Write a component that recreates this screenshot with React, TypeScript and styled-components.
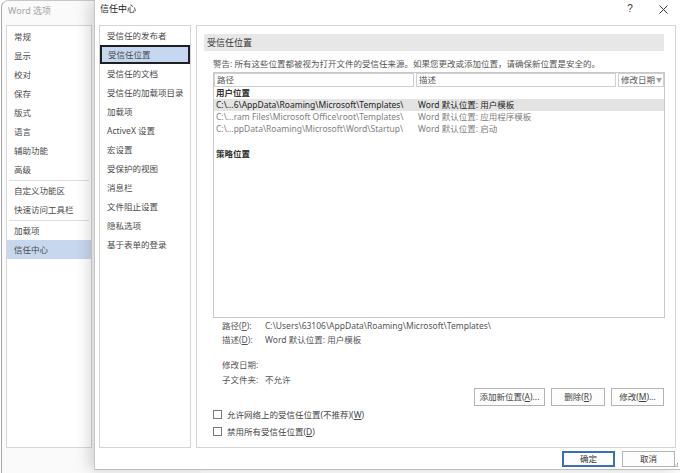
import React from "react";
import styled, { createGlobalStyle } from "styled-components";

const GlobalStyle = createGlobalStyle`
  html, body {
    margin: 0;
    padding: 0;
    background: #fff;
  }
  * {
    box-sizing: border-box;
  }
`;

const font = `"Noto Sans", "Noto Sans CJK SC", sans-serif`;

const Screen = styled.div`
  position: relative;
  width: 680px;
  height: 473px;
  overflow: hidden;
  background: #fff;
  font-family: ${font};
  font-size: 8.5px;
  color: #444;
`;

/* Word 选项 window, sitting behind the dialog */
const BackWindow = styled.div`
  position: absolute;
  left: 1px;
  top: 0;
  width: 200px;
  height: 490px;
  background: #fafafa;
  border-left: 1px solid #a6a6a6;
  border-top: 1px solid #c8c8c8;
  border-top-left-radius: 7px;
  padding-left: 4px;
`;

const BackTitle = styled.div`
  height: 24px;
  line-height: 20px;
  padding-left: 2px;
  color: #a3a3a3;
  font-size: 9px;
`;

const BackList = styled.div`
  width: 86px;
  height: 423px;
  background: #fff;
  border: 1px solid #d6d6d6;
  padding-top: 1px;
`;

const BackItem = styled.div<{ $active?: boolean }>`
  height: 19px;
  line-height: 19px;
  padding-left: 7px;
  color: #4a4a4a;
  background: ${({ $active }) => ($active ? "#c7d7ee" : "transparent")};
`;

const Separator = styled.div`
  height: 1px;
  margin: 1px 2px 0;
  background: #dedede;
`;

/* 信任中心 dialog */
const Dialog = styled.div`
  position: absolute;
  left: 94px;
  top: 0;
  width: 586px;
  height: 470px;
  background: #fff;
  border-left: 1px solid #c6c6c6;
  border-bottom: 1px solid #bdbdbd;
  box-shadow: -5px 0 14px rgba(0, 0, 0, 0.16);
  display: flex;
  flex-direction: column;
`;

const TitleBar = styled.div`
  height: 25px;
  display: flex;
  align-items: flex-start;
  padding: 0 0 0 5px;
`;

const TitleText = styled.div`
  flex: 1;
  line-height: 18px;
  font-size: 9px;
  color: #222;
`;

const TitleIcon = styled.div<{ $w: number }>`
  width: ${({ $w }) => $w}px;
  line-height: 18px;
  text-align: center;
  color: #333;
  font-family: "Liberation Sans", sans-serif;
  font-size: 10px;
`;

const Body = styled.div`
  display: flex;
  gap: 5px;
  height: 423px;
  padding: 0 4px 0 4px;
`;

const Nav = styled.div`
  width: 92px;
  flex-shrink: 0;
  border: 1px solid #d4d4d4;
`;

const NavItem = styled.div<{ $active?: boolean }>`
  height: 19px;
  line-height: ${({ $active }) => ($active ? "15px" : "19px")};
  padding-left: ${({ $active }) => ($active ? "6px" : "7px")};
  color: #4a4a4a;
  background: ${({ $active }) => ($active ? "#c6d8f1" : "transparent")};
  border: ${({ $active }) => ($active ? "2px solid #1f1f1f" : "none")};
`;

const Panel = styled.div`
  flex: 1;
  border: 1px solid #d4d4d4;
  padding: 8px 11px 0 7px;
  display: flex;
  flex-direction: column;
`;

const SectionHeader = styled.div`
  height: 17px;
  line-height: 17px;
  background: #e7e7e7;
  padding-left: 3px;
  color: #333;
  font-size: 9px;
`;

const Content = styled.div`
  padding-left: 9px;
  margin-right: -1px;
  display: flex;
  flex-direction: column;
`;

const Warning = styled.div`
  margin-top: 7px;
  height: 14px;
  line-height: 12px;
  color: #555;
  white-space: nowrap;
`;

const ListBox = styled.div`
  height: 246px;
  border: 1px solid #c9c9c9;
  background: #fff;
`;

const Columns = styled.div`
  display: grid;
  grid-template-columns: 200px 200px 1fr;
  column-gap: 2px;
`;

const HeaderCell = styled.div`
  height: 14px;
  line-height: 12px;
  border: 1px solid #cfcfcf;
  padding-left: 2px;
  color: #555;
  display: flex;
  justify-content: space-between;
  align-items: center;
  white-space: nowrap;
  overflow: hidden;
`;

const SortArrow = styled.span`
  font-size: 6px;
  color: #a0a0a0;
  padding-right: 1px;
`;

const GroupLabel = styled.div<{ $gap?: number }>`
  height: 12px;
  line-height: 12px;
  margin-top: ${({ $gap }) => $gap ?? 0}px;
  padding-left: 2px;
  font-weight: 700;
  color: #333;
`;

const Row = styled(Columns)<{ $selected?: boolean; $muted?: boolean }>`
  height: 12px;
  line-height: 12px;
  background: ${({ $selected }) => ($selected ? "#e3e3e3" : "transparent")};
  color: ${({ $muted }) => ($muted ? "#808080" : "#222")};
  white-space: nowrap;

  & > span {
    padding-left: 2px;
    overflow: hidden;
  }
`;

const Details = styled.div`
  margin-top: 1px;
  padding-left: 18px;
  display: grid;
  grid-template-columns: 43px 1fr;
`;

const DetailLine = styled.div<{ $gap?: number }>`
  height: 14px;
  line-height: 14px;
  margin-top: ${({ $gap }) => $gap ?? 0}px;
  color: #555;
  white-space: nowrap;
`;

const ButtonRow = styled.div`
  margin-top: 1px;
  display: flex;
  justify-content: flex-end;
  gap: 6px;
`;

const ActionButton = styled.div<{ $w: number }>`
  width: ${({ $w }) => $w}px;
  height: 18px;
  line-height: 16px;
  text-align: center;
  border: 1px solid #b3b3b3;
  background: #fdfdfd;
  color: #444;
`;

const CheckRow = styled.div<{ $gap: number }>`
  margin-top: ${({ $gap }) => $gap}px;
  height: 12px;
  display: flex;
  align-items: center;
  gap: 5px;
  color: #444;
`;

const CheckBox = styled.span`
  width: 9px;
  height: 9px;
  border: 1px solid #7a7a7a;
  background: #fff;
`;

const Footer = styled.div`
  display: flex;
  justify-content: flex-end;
  gap: 7px;
  padding: 3px 5px 0 0;
`;

const FooterButton = styled.div<{ $primary?: boolean }>`
  width: 53px;
  height: 16px;
  line-height: ${({ $primary }) => ($primary ? "12px" : "14px")};
  text-align: center;
  background: #fdfdfd;
  color: #333;
  border: ${({ $primary }) => ($primary ? "2px solid #3a6fb7" : "1px solid #b3b3b3")};
`;

const Grip = styled.svg`
  position: absolute;
  right: 1px;
  bottom: 1px;
`;

const backItems: Array<string | null> = [
  "常规",
  "显示",
  "校对",
  "保存",
  "版式",
  "语言",
  "辅助功能",
  "高级",
  null,
  "自定义功能区",
  "快速访问工具栏",
  null,
  "加载项",
  "信任中心",
];

const navItems = [
  "受信任的发布者",
  "受信任位置",
  "受信任的文档",
  "受信任的加载项目录",
  "加载项",
  "ActiveX 设置",
  "宏设置",
  "受保护的视图",
  "消息栏",
  "文件阻止设置",
  "隐私选项",
  "基于表单的登录",
];

const locations = [
  { path: "C:\\...6\\AppData\\Roaming\\Microsoft\\Templates\\", desc: "Word 默认位置: 用户模板" },
  { path: "C:\\...ram Files\\Microsoft Office\\root\\Templates\\", desc: "Word 默认位置: 应用程序模板" },
  { path: "C:\\...ppData\\Roaming\\Microsoft\\Word\\Startup\\", desc: "Word 默认位置: 启动" },
];

export default function App() {
  return (
    <Screen>
      <GlobalStyle />
      <BackWindow>
        <BackTitle>Word 选项</BackTitle>
        <BackList>
          {backItems.map((item, i) =>
            item === null ? (
              <Separator key={i} />
            ) : (
              <BackItem key={i} $active={item === "信任中心"}>
                {item}
              </BackItem>
            )
          )}
        </BackList>
      </BackWindow>

      <Dialog>
        <TitleBar>
          <TitleText>信任中心</TitleText>
          <TitleIcon $w={20}>?</TitleIcon>
          <TitleIcon $w={14} style={{ marginLeft: 16, marginRight: 10 }}>
            <svg width="9" height="9" viewBox="0 0 9 9" style={{ marginTop: 5 }}>
              <path d="M0.5 0.5 L8.5 8.5 M8.5 0.5 L0.5 8.5" stroke="#333" strokeWidth="1" />
            </svg>
          </TitleIcon>
        </TitleBar>

        <Body>
          <Nav>
            {navItems.map((item) => (
              <NavItem key={item} $active={item === "受信任位置"}>
                {item}
              </NavItem>
            ))}
          </Nav>

          <Panel>
            <SectionHeader>受信任位置</SectionHeader>
            <Content>
              <Warning>
                警告: 所有这些位置都被视为打开文件的受信任来源。如果您更改或添加位置，请确保新位置是安全的。
              </Warning>
              <ListBox>
                <Columns>
                  <HeaderCell>路径</HeaderCell>
                  <HeaderCell>描述</HeaderCell>
                  <HeaderCell>
                    修改日期<SortArrow>▼</SortArrow>
                  </HeaderCell>
                </Columns>
                <GroupLabel>用户位置</GroupLabel>
                {locations.map((loc, i) => (
                  <Row key={loc.path} $selected={i === 0} $muted={i > 0}>
                    <span>{loc.path}</span>
                    <span>{loc.desc}</span>
                    <span />
                  </Row>
                ))}
                <GroupLabel $gap={13}>策略位置</GroupLabel>
              </ListBox>
            </Content>

            <Details>
              <DetailLine>
                路径(<u>P</u>):
              </DetailLine>
              <DetailLine>C:\Users\63106\AppData\Roaming\Microsoft\Templates\</DetailLine>
              <DetailLine>
                描述(<u>D</u>):
              </DetailLine>
              <DetailLine>Word 默认位置: 用户模板</DetailLine>
              <DetailLine $gap={11}>修改日期:</DetailLine>
              <DetailLine $gap={11} />
              <DetailLine $gap={1}>子文件夹:</DetailLine>
              <DetailLine $gap={1}>不允许</DetailLine>
            </Details>

            <ButtonRow>
              <ActionButton $w={71}>
                添加新位置(<u>A</u>)...
              </ActionButton>
              <ActionButton $w={54}>
                删除(<u>R</u>)
              </ActionButton>
              <ActionButton $w={53}>
                修改(<u>M</u>)...
              </ActionButton>
            </ButtonRow>

            <Content>
              <CheckRow $gap={2}>
                <CheckBox />
                <span>
                  允许网络上的受信任位置(不推荐)(<u>W</u>)
                </span>
              </CheckRow>
              <CheckRow $gap={5}>
                <CheckBox />
                <span>
                  禁用所有受信任位置(<u>D</u>)
                </span>
              </CheckRow>
            </Content>
          </Panel>
        </Body>

        <Footer>
          <FooterButton $primary>确定</FooterButton>
          <FooterButton>取消</FooterButton>
        </Footer>

        <Grip width="5" height="5" viewBox="0 0 5 5">
          <rect x="3" y="0" width="1" height="1" fill="#999" />
          <rect x="1.5" y="1.5" width="1" height="1" fill="#999" />
          <rect x="3" y="1.5" width="1" height="1" fill="#999" />
          <rect x="0" y="3" width="1" height="1" fill="#999" />
          <rect x="1.5" y="3" width="1" height="1" fill="#999" />
          <rect x="3" y="3" width="1" height="1" fill="#999" />
        </Grip>
      </Dialog>
    </Screen>
  );
}
